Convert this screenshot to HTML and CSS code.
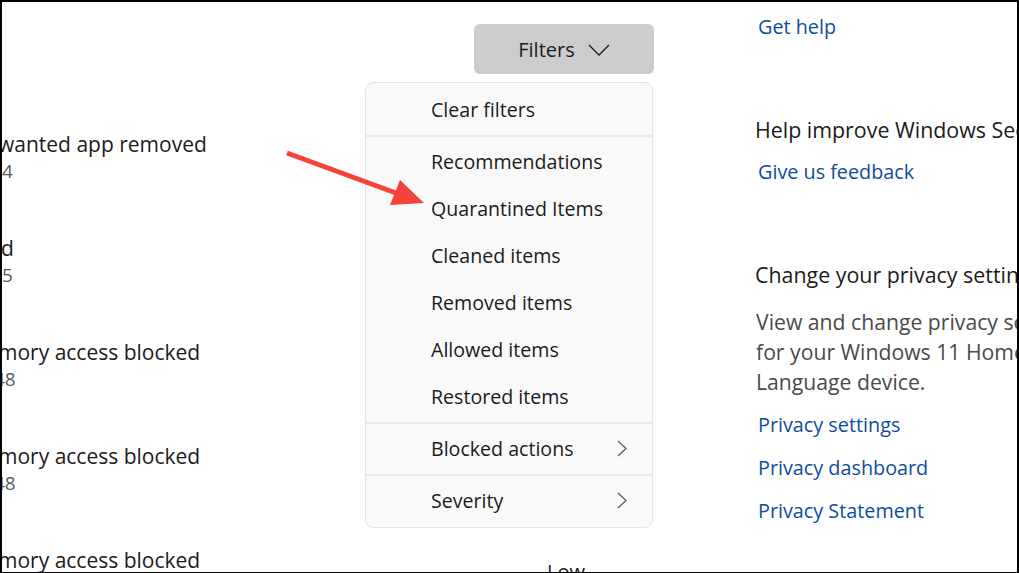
FILE: index.html
```html
<!DOCTYPE html>
<html lang="en">
<head>
<meta charset="utf-8">
<title>Protection history</title>
<link rel="stylesheet" href="styles.css">
</head>
<body>
<div class="frame">
  <section class="history">
    <div class="toolbar">
      <button class="filters" type="button">
        <span>Filters</span>
        <svg class="chev-down" width="22" height="12" viewBox="0 0 22 12"><polyline points="1,1 11,11 21,1" fill="none" stroke="#1b1b1b" stroke-width="1.3"/></svg>
      </button>
    </div>
    <div class="rows">
      <div class="row">
        <div class="info"><div class="title first-clip">wanted app removed</div><div class="date">4</div></div>
      </div>
      <div class="row">
        <div class="info"><div class="title">d</div><div class="date">5</div></div>
      </div>
      <div class="row">
        <div class="info"><div class="title clip">mory access blocked</div><div class="date dclip">48</div></div>
      </div>
      <div class="row">
        <div class="info"><div class="title clip">mory access blocked</div><div class="date dclip">48</div></div>
      </div>
      <div class="row">
        <div class="info"><div class="title clip">mory access blocked</div><div class="date dclip">48</div></div>
        <div class="sev">Low</div>
      </div>
    </div>

    <div class="menu">
      <div class="group">
        <div class="item">Clear filters</div>
      </div>
      <div class="divider"></div>
      <div class="group">
        <div class="item">Recommendations</div>
        <div class="item">Quarantined Items</div>
        <div class="item">Cleaned items</div>
        <div class="item">Removed items</div>
        <div class="item">Allowed items</div>
        <div class="item">Restored items</div>
      </div>
      <div class="divider"></div>
      <div class="item sub">Blocked actions
        <svg class="chev-right" width="10" height="17" viewBox="0 0 10 17"><polyline points="1,1 9,8.5 1,16" fill="none" stroke="#555" stroke-width="1.2"/></svg>
      </div>
      <div class="divider"></div>
      <div class="item sub">Severity
        <svg class="chev-right" width="10" height="17" viewBox="0 0 10 17"><polyline points="1,1 9,8.5 1,16" fill="none" stroke="#555" stroke-width="1.2"/></svg>
      </div>
    </div>
  </section>

  <aside class="side">
    <a class="link first" href="#">Get help</a>
    <h2 class="heading gap">Help improve Windows Security</h2>
    <a class="link near" href="#">Give us feedback</a>
    <h2 class="heading gap">Change your privacy settings</h2>
    <p class="para"><span>View and change privacy settings</span><span>for your Windows 11 Home Single</span><span>Language device.</span></p>
    <a class="link near" href="#">Privacy settings</a>
    <a class="link list" href="#">Privacy dashboard</a>
    <a class="link list" href="#">Privacy Statement</a>
  </aside>

  <svg class="arrow" width="1015" height="570" viewBox="0 0 1015 570">
    <line x1="285" y1="151" x2="394" y2="191" stroke="#f4433a" stroke-width="5"/>
    <polygon points="398,178 388,203 422,201" fill="#f4433a"/>
  </svg>
</div>
</body>
</html>
```

FILE: styles.css
```css
* { box-sizing: border-box; }

html, body {
  margin: 0;
  padding: 0;
  background: #ffffff;
}

body {
  width: 1019px;
  height: 573px;
  overflow: hidden;
  font-family: "Open Sans", "Noto Sans", sans-serif;
  color: #1b1b1b;
}

.frame {
  position: relative;
  width: 1019px;
  height: 573px;
  border-top: 2px solid #000;
  border-left: 2px solid #000;
  border-right: 2px solid #000;
  border-bottom: 1px solid #000;
  display: flex;
  overflow: hidden;
}

.history {
  position: relative;
  width: 652px;
  flex: none;
}

.toolbar {
  display: flex;
  justify-content: flex-end;
  padding-top: 22px;
}

.filters {
  width: 180px;
  height: 50px;
  border: none;
  border-radius: 6px;
  background: #cccccc;
  display: flex;
  align-items: center;
  justify-content: center;
  gap: 13px;
  font-family: inherit;
  font-size: 20px;
  color: #1b1b1b;
  padding: 0;
}

.chev-down { display: block; margin-top: 1px; }

.rows {
  margin-top: 32px;
}

.row {
  height: 104px;
  display: grid;
  grid-template-columns: 545px 1fr;
  align-items: center;
}

.info { overflow: hidden; }

.title {
  font-size: 21px;
  line-height: 27px;
  white-space: nowrap;
  color: #1b1b1b;
  margin-left: -1px;
}

.date {
  font-size: 19px;
  line-height: 27px;
  white-space: nowrap;
  color: #5a5a5a;
}

.first-clip { margin-left: -4px; }
.clip { margin-left: -4px; }
.dclip { margin-left: -8px; }

.sev {
  font-size: 20px;
  line-height: 27px;
  margin-bottom: 5px;
  color: #1b1b1b;
}

.menu {
  position: absolute;
  left: 363px;
  top: 80px;
  width: 288px;
  background: #f9f9f9;
  border: 1px solid #e4e4e4;
  border-radius: 8px;
  padding: 3px 0;
}

.item {
  height: 47px;
  display: flex;
  align-items: center;
  padding-left: 65px;
  font-size: 19.6px;
  color: #1b1b1b;
}

.item.sub {
  justify-content: space-between;
  padding-right: 25px;
}

.chev-right { display: block; }

.divider {
  height: 2px;
  background: #e8e8e8;
  margin: 2px 0 1px;
}

.side {
  margin-left: 101px;
  flex: 1;
  min-width: 0;
  overflow: hidden;
  display: flex;
  flex-direction: column;
  align-items: flex-start;
  white-space: nowrap;
}

.link {
  display: block;
  font-size: 19.8px;
  line-height: 28px;
  color: #0f4c9e;
  text-decoration: none;
  margin-left: 3px;
}

.link.first { margin-top: 11px; }
.link.near { margin-top: 14px; }
.link.list { margin-top: 15px; }

.heading {
  margin: 0;
  font-weight: normal;
  font-size: 21.4px;
  line-height: 28px;
  color: #1b1b1b;
}

.heading.gap { margin-top: 75px; }

.para {
  margin: 18px 0 0;
  font-size: 21.2px;
  line-height: 30px;
  color: #4a4a4a;
  display: flex;
  flex-direction: column;
  margin-left: 1px;
}

.arrow {
  position: absolute;
  left: 0;
  top: 0;
  pointer-events: none;
}
```
